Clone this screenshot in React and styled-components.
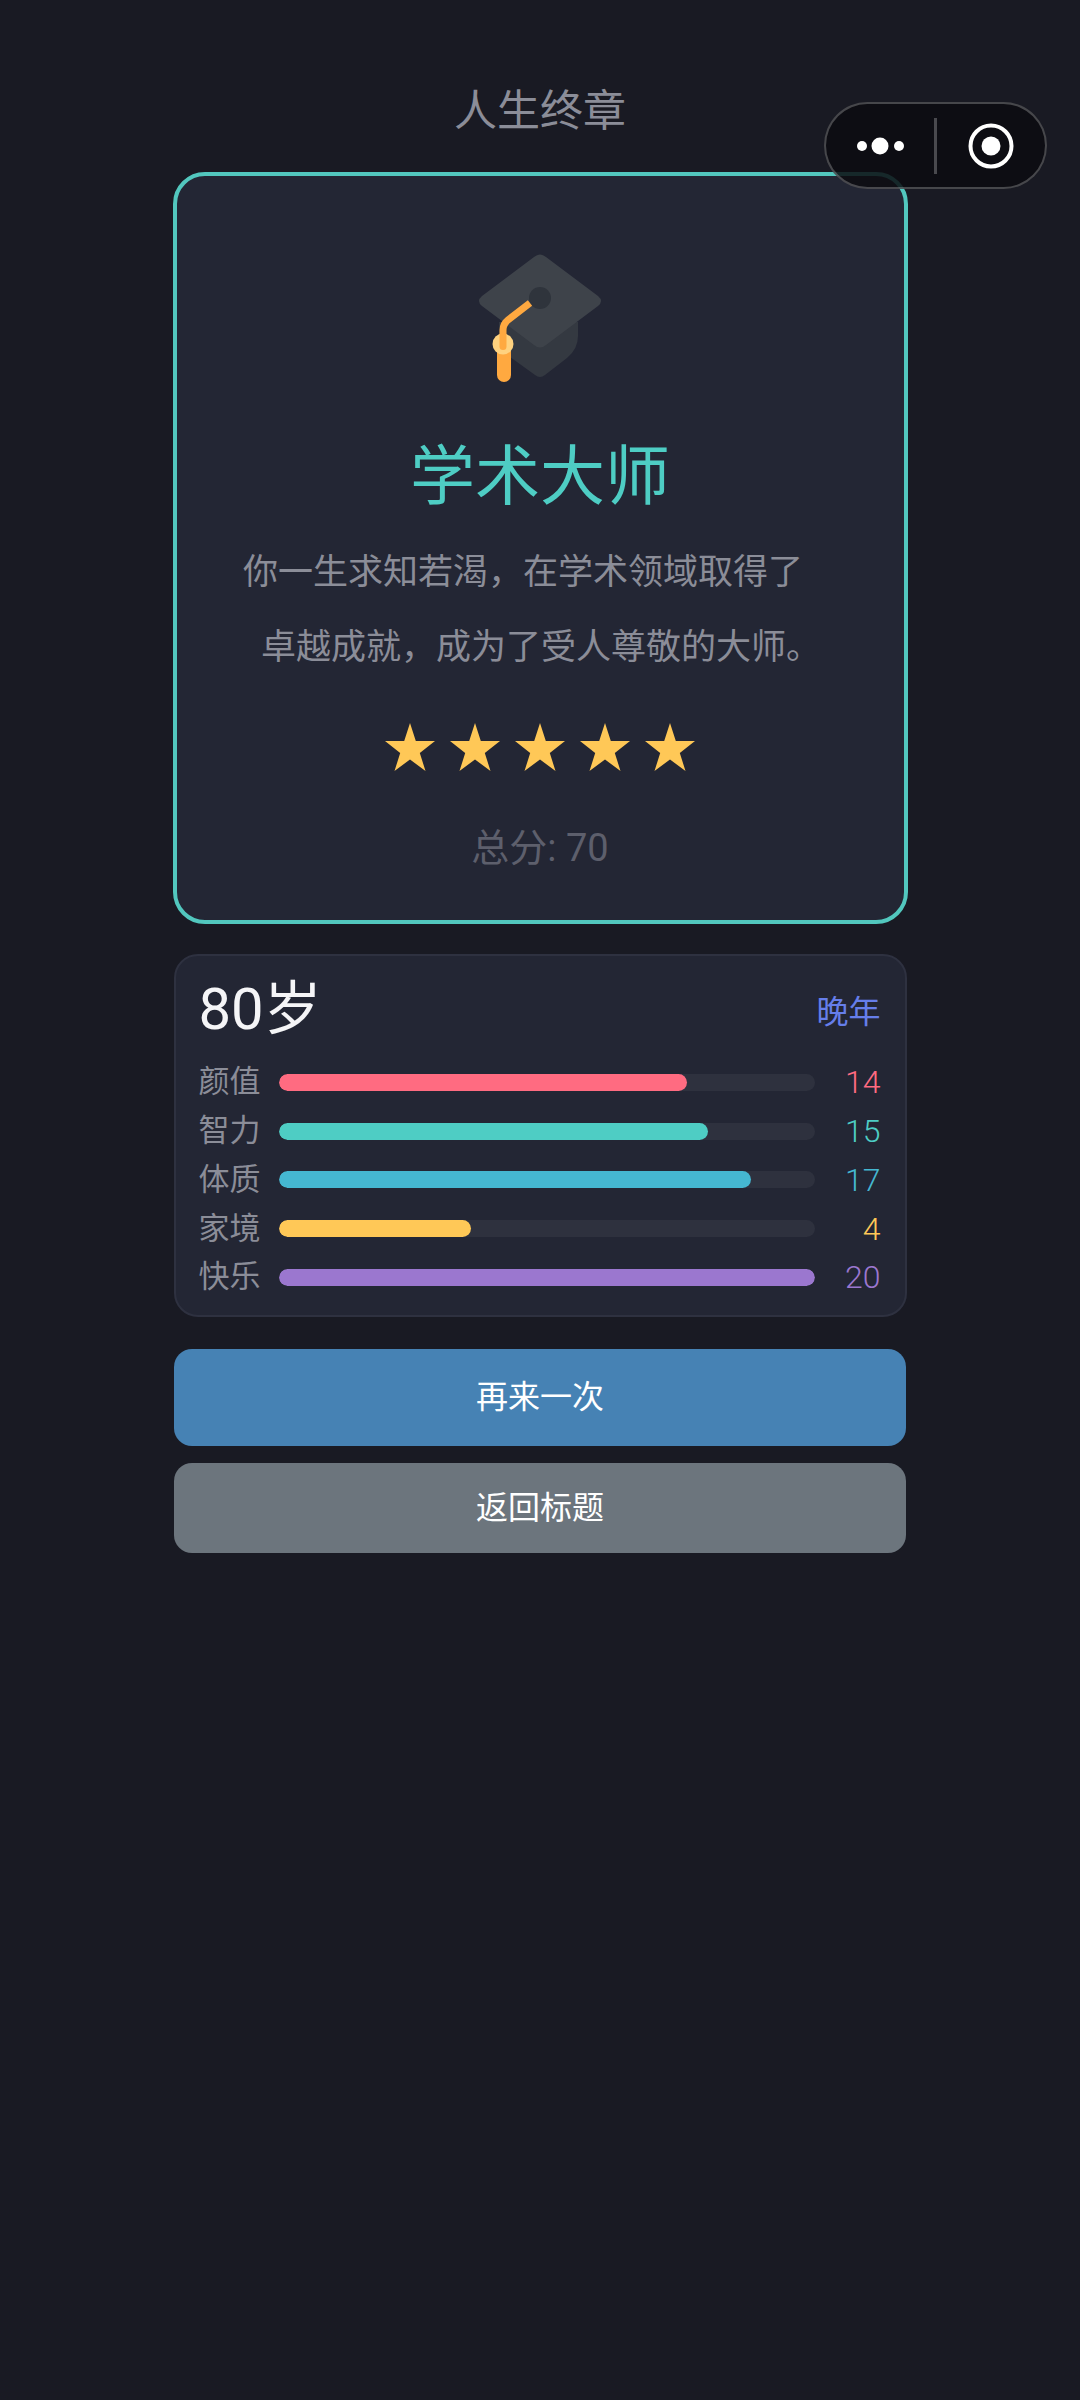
import React from 'react';
import styled, { createGlobalStyle } from 'styled-components';

const Global = createGlobalStyle`
  html, body { margin: 0; padding: 0; background: #191a23; }
  body { font-family: "Roboto", "Noto Sans CJK SC", sans-serif; font-weight: 400; }
`;

const Page = styled.div`
  position: relative;
  width: 1080px;
  height: 2400px;
  box-sizing: border-box;
  background: #191a23;
  padding-top: 81px;
  display: flex;
  flex-direction: column;
  align-items: center;
  overflow: hidden;
`;

const PageTitle = styled.h1`
  margin: 0;
  height: 91px;
  line-height: 60px;
  font-size: 43px;
  font-weight: 400;
  color: #8b8d98;
`;

const Capsule = styled.div`
  position: absolute;
  top: 102px;
  left: 824px;
  width: 223px;
  height: 87px;
  box-sizing: border-box;
  border-radius: 44px;
  border: 2.5px solid rgba(255, 255, 255, 0.24);
  background: rgba(12, 12, 16, 0.85);
  display: flex;
  align-items: center;
`;

const CapsuleSide = styled.div`
  flex: 1;
  display: flex;
  align-items: center;
  justify-content: center;
`;

const CapsuleRule = styled.div`
  width: 3px;
  height: 56px;
  background: rgba(255, 255, 255, 0.25);
`;

const Card = styled.section`
  width: 735px;
  height: 752px;
  box-sizing: border-box;
  border: 4px solid #52c7be;
  border-radius: 32px;
  background: #232634;
  display: flex;
  flex-direction: column;
  align-items: center;
  padding-top: 74px;
`;

const Hat = styled.svg`
  width: 130px;
  height: 135px;
  display: block;
`;

const CardTitle = styled.h2`
  margin: 47px 0 0;
  font-size: 65px;
  line-height: 90px;
  font-weight: 400;
  color: #4ecdc4;
`;

const Desc = styled.div`
  margin-top: 13px;
  display: flex;
  flex-direction: column;
  align-items: center;
`;

const DescLine = styled.span`
  font-size: 35px;
  line-height: 75px;
  color: #8b8d98;
  white-space: nowrap;
  margin-left: ${p => p.$shift}px;
`;

const Stars = styled.div`
  margin-top: 38px;
  display: flex;
  gap: 15px;
`;

const Star = styled.svg`
  width: 50px;
  height: 48px;
  display: block;
`;

const Score = styled.div`
  margin-top: 51px;
  font-size: 38px;
  font-weight: 400;
  line-height: 52px;
  color: #5d5f6c;
`;

const Panel = styled.section`
  margin-top: 30px;
  width: 733px;
  height: 363px;
  box-sizing: border-box;
  border: 2px solid #2e3140;
  border-radius: 24px;
  background: #232634;
  padding: 15px 24px 0 23px;
`;

const PanelHead = styled.div`
  display: flex;
  justify-content: space-between;
  align-items: center;
  height: 76px;
  margin-bottom: 14px;
`;

const Age = styled.div`
  font-size: 58px;
  color: #f5f5f7;
  line-height: 76px;
`;

const Stage = styled.div`
  font-size: 32px;
  color: #667eea;
`;

const Rows = styled.div`
  display: flex;
  flex-direction: column;
  gap: 6px;
`;

const Row = styled.div`
  display: flex;
  align-items: center;
  height: 42.75px;
`;

const RowLabel = styled.div`
  width: 80px;
  flex: none;
  font-size: 31px;
  color: #8b8d98;
  line-height: 42px;
`;

const Track = styled.div`
  width: 536px;
  flex: none;
  height: 17px;
  border-radius: 9px;
  background: #2e313e;
  overflow: hidden;
`;

const Fill = styled.div`
  height: 100%;
  border-radius: 9px;
  background: ${p => p.$color};
`;

const Value = styled.div`
  flex: 1;
  text-align: right;
  font-size: 32px;
  font-weight: 300;
  color: ${p => p.$color};
`;

const Button = styled.button`
  display: block;
  width: 732px;
  height: ${p => p.$h}px;
  margin-top: ${p => p.$mt}px;
  border: none;
  border-radius: 18px;
  background: ${p => p.$bg};
  color: #fff;
  font: 400 32px "Noto Sans CJK SC", sans-serif;
  padding: 0 0 ${p => p.$lift}px;
`;

const stats = [
  ['颜值', 14, 76.2, '#ff6b81'],
  ['智力', 15, 80.2, '#4ecdc4'],
  ['体质', 17, 88.2, '#45b7d1'],
  ['家境', 4, 36, '#ffc857'],
  ['快乐', 20, 100, '#9b77cf'],
];

export default function App() {
  return (
    <>
      <Global />
      <Page>
        <PageTitle>人生终章</PageTitle>
        <Capsule>
          <CapsuleSide>
            <svg width="48" height="20" viewBox="0 0 48 20">
              <circle cx="6" cy="10" r="5" fill="#fff" />
              <circle cx="24" cy="10" r="8.5" fill="#fff" />
              <circle cx="43" cy="10" r="5" fill="#fff" />
            </svg>
          </CapsuleSide>
          <CapsuleRule />
          <CapsuleSide>
            <svg width="46" height="46" viewBox="0 0 46 46">
              <circle cx="23" cy="23" r="20.5" fill="none" stroke="#fff" strokeWidth="4" />
              <circle cx="23" cy="23" r="9.5" fill="#fff" />
            </svg>
          </CapsuleSide>
        </Capsule>
        <Card>
          <Hat viewBox="0 0 130 135">
            <path d="M24 72 L24 95 Q24 99 28 102 L60 125 Q65 129 70 125 L92 108 Q103 99 103 86 L103 72 Z" fill="#343941" />
            <path d="M59 7 Q65 2 71 7 L123 46 Q129 51 123 56 L71 95 Q65 100 59 95 L7 56 Q1 51 7 46 Z" fill="#3e434a" />
            <circle cx="65" cy="48" r="11" fill="#2f343c" />
            <path d="M55 53 L33 70 Q28 74 28 80 L28 94" fill="none" stroke="#ffa940" strokeWidth="7" />
            <rect x="22" y="94" width="14" height="38" rx="7" fill="#ffa940" />
            <circle cx="28" cy="94" r="10.5" fill="#ffd27f" />
            <rect x="24.5" y="82" width="7" height="18" rx="3.5" fill="#ffa940" />
          </Hat>
          <CardTitle>学术大师</CardTitle>
          <Desc>
            <DescLine $shift={-34}>你一生求知若渴，在学术领域取得了</DescLine>
            <DescLine $shift={2}>卓越成就，成为了受人尊敬的大师。</DescLine>
          </Desc>
          <Stars>
            {[0, 1, 2, 3, 4].map(i => (
              <Star key={i} viewBox="0 0 50 48">
                <polygon points="25,0 30.8,18 50,18 34.8,30 40.5,48 25,36.5 9.5,48 15.2,30 0,18 19.2,18" fill="#ffc857" />
              </Star>
            ))}
          </Stars>
          <Score>总分: 70</Score>
        </Card>
        <Panel>
          <PanelHead>
            <Age>80岁</Age>
            <Stage>晚年</Stage>
          </PanelHead>
          <Rows>
            {stats.map(([label, val, pct, color]) => (
              <Row key={label}>
                <RowLabel>{label}</RowLabel>
                <Track><Fill $color={color} style={{ width: `${pct}%` }} /></Track>
                <Value $color={color}>{val}</Value>
              </Row>
            ))}
          </Rows>
        </Panel>
        <Button $h={97} $mt={32} $lift={8} $bg="#4682b4">再来一次</Button>
        <Button $h={90} $mt={17} $lift={6} $bg="#6c757d">返回标题</Button>
      </Page>
    </>
  );
}
